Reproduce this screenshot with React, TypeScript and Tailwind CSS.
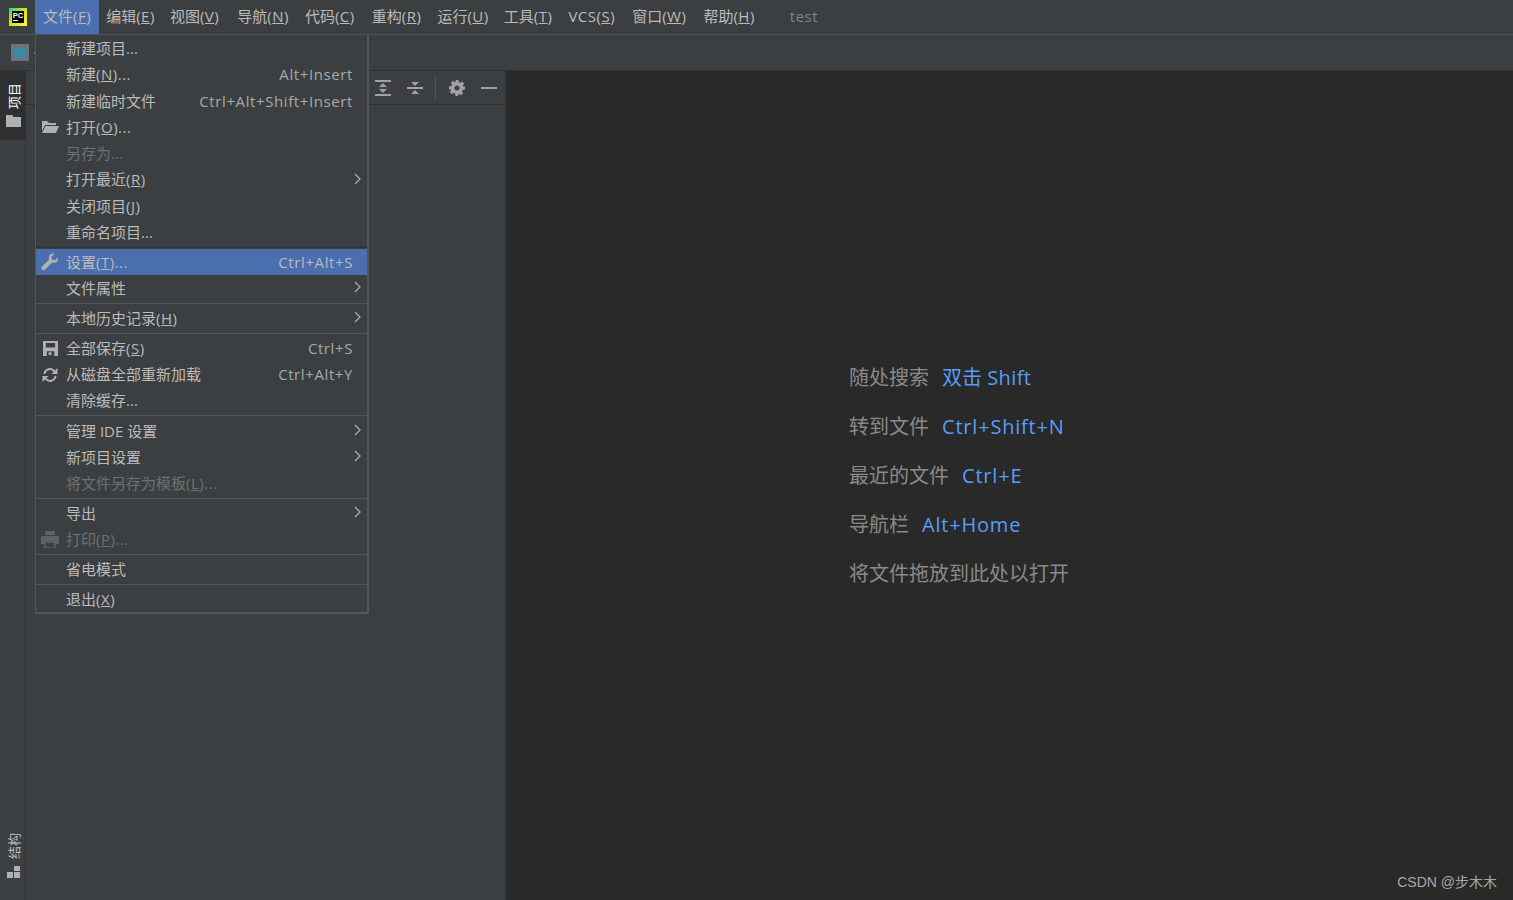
import React from 'react';

const menuBar = [
  { name: '编辑', key: 'E', cls: '-ml-px' },
  { name: '视图', key: 'V', cls: '-ml-px' },
  { name: '导航', key: 'N', cls: 'ml-[2px]' },
  { name: '代码', key: 'C', cls: '' },
  { name: '重构', key: 'R', cls: 'ml-px' },
  { name: '运行', key: 'U', cls: '' },
  { name: '工具', key: 'T', cls: '-ml-px' },
  { name: 'VCS', key: 'S', cls: '' },
  { name: '窗口', key: 'W', cls: 'ml-px' },
  { name: '帮助', key: 'H', cls: 'ml-px' },
];

const FONT = "font-['Open_Sans','Noto_Sans_CJK_SC',sans-serif]";

const FolderOpenIcon = () => (
  <svg width="18" height="14" viewBox="0 0 18 14"><path d="M1 1h5l2 2h7v2H4L1 11z" fill="#afb1b3" /><path d="M4.500 6H18l-3 7H1z" fill="#afb1b3" /></svg>
);
const WrenchIcon = () => (
  <svg width="18" height="18" viewBox="0 0 18 18"><path d="M17 4.200l-3.200 3-2.700-.6-.7-2.700L13.500.8C11 0 8.300 1.200 7.800 3.800c-.2 1 0 1.900.3 2.700L1 13.500c-.9 1-.8 2.300 0 3.100.9.900 2.300.9 3.100 0l7-7c2.500.8 5.100-.2 5.800-2.700.2-.9.200-1.800.1-2.700z" fill="#afb1b3" /></svg>
);
const SaveIcon = () => (
  <svg width="15" height="15" viewBox="0 0 16 16"><path fillRule="evenodd" d="M0 0h16v16H0zM3 2v5h10V2zM4 11v5h8v-5z" fill="#afb1b3" /><rect x="6" y="12" width="3" height="3" fill="#afb1b3" /></svg>
);
const ReloadIcon = () => (
  <svg width="16" height="16" viewBox="0 0 16 16" fill="none"><path d="M2.500 7A5.500 5.500 0 0 1 12.500 4.500" stroke="#afb1b3" strokeWidth="2" /><path d="M15.500 1v6h-6z" fill="#afb1b3" /><path d="M13.500 9A5.500 5.500 0 0 1 3.500 11.500" stroke="#afb1b3" strokeWidth="2" /><path d="M.5 15V9h6z" fill="#afb1b3" /></svg>
);
const PrintIcon = () => (
  <svg width="18" height="17" viewBox="0 0 18 17"><path d="M4 0h10v4H4zM1 5h16a1 1 0 0 1 1 1v7h-4v-3H4v3H0V6a1 1 0 0 1 1-1z" fill="#5f6264" /><rect x="4" y="11" width="10" height="6" fill="none" stroke="#5f6264" strokeWidth="1.500" /></svg>
);

const Chevron = () => (
  <svg width="8" height="12" viewBox="0 0 8 12" fill="none" className="absolute right-[5px] top-[6px]"><path d="M1 1l5 5-5 5" stroke="#a9abad" strokeWidth="1.300" /></svg>
);

interface Row {
  label: string;
  key?: string;
  tail?: string;
  accel?: string;
  icon?: React.ReactNode;
  sub?: boolean;
  off?: boolean;
  active?: boolean;
}

const groups: { cls: string; rows: Row[] }[] = [
  {
    cls: 'pt-[0.3px] pb-[0.5px]',
    rows: [
      { label: '新建项目...' },
      { label: '新建', key: 'N', tail: '...', accel: 'Alt+Insert' },
      { label: '新建临时文件', accel: 'Ctrl+Alt+Shift+Insert' },
      { label: '打开', key: 'O', tail: '...', icon: <FolderOpenIcon /> },
      { label: '另存为...', off: true },
      { label: '打开最近', key: 'R', sub: true },
      { label: '关闭项目', key: 'J' },
      { label: '重命名项目...' },
    ],
  },
  {
    cls: 'border-t-2 border-[#323537] pt-px',
    rows: [
      { label: '设置', key: 'T', tail: '...', accel: 'Ctrl+Alt+S', icon: <WrenchIcon />, active: true },
      { label: '文件属性', sub: true },
    ],
  },
  { cls: 'border-t border-[#515658] mt-[1.5px] py-px', rows: [{ label: '本地历史记录', key: 'H', sub: true }] },
  {
    cls: 'border-t border-[#515658] pt-[1.7px] pb-px',
    rows: [
      { label: '全部保存', key: 'S', accel: 'Ctrl+S', icon: <SaveIcon /> },
      { label: '从磁盘全部重新加载', accel: 'Ctrl+Alt+Y', icon: <ReloadIcon /> },
      { label: '清除缓存...' },
    ],
  },
  {
    cls: 'border-t border-[#515658] pt-[1.8px] pb-[0.8px]',
    rows: [
      { label: '管理 IDE 设置', sub: true },
      { label: '新项目设置', sub: true },
      { label: '将文件另存为模板', key: 'L', tail: '...', off: true },
    ],
  },
  {
    cls: 'border-t border-[#515658] pt-[1.6px] pb-px',
    rows: [
      { label: '导出', sub: true },
      { label: '打印', key: 'P', tail: '...', off: true, icon: <PrintIcon /> },
    ],
  },
  { cls: 'border-t border-[#515658] pt-[1.8px] pb-px', rows: [{ label: '省电模式' }] },
  { cls: 'border-t border-[#515658] pt-[1.7px] -mb-px', rows: [{ label: '退出', key: 'X' }] },
];

const MenuRow = ({ row }: { row: Row }) => (
  <div className={`relative flex h-[26.3px] items-center justify-between pl-[30px] pr-[14px] ${row.active ? 'bg-[#4b6eaf]' : ''} ${row.off ? 'text-[#6d7072]' : 'text-[#bbbbbb]'}`}>
    {row.icon && <span className="absolute left-[5px] top-0 flex h-full w-[18px] items-center justify-center">{row.icon}</span>}
    <span>
      {row.label}
      {row.key && <span className="tracking-[0.5px]">(<u>{row.key}</u>){row.tail}</span>}
    </span>
    {row.accel && <span className={`tracking-[0.6px] ${row.active ? 'text-[#bbbbbb]' : 'text-[#a6a9ab]'}`}>{row.accel}</span>}
    {row.sub && <Chevron />}
  </div>
);

const hints: [string, string, string][] = [
  ['随处搜索', '双击 ', 'Shift'],
  ['转到文件', '', 'Ctrl+Shift+N'],
  ['最近的文件', '', 'Ctrl+E'],
  ['导航栏', '', 'Alt+Home'],
  ['将文件拖放到此处以打开', '', ''],
];

export default function App() {
  return (
    <div className={`relative flex h-[900px] w-[1513px] flex-col overflow-hidden bg-[#3c3f41] text-[15px] leading-none text-[#bbbbbb] ${FONT}`}>
      {/* 顶部菜单 */}
      <div className="flex h-[35px] shrink-0 items-center border-b border-[#505356]">
        <div className="flex w-[35px] justify-center">
          <svg width="18" height="18" viewBox="0 0 18 18">
            <defs>
              <linearGradient id="pc" x1="0" y1="0" x2="1" y2="1">
                <stop offset="0" stopColor="#21d789" />
                <stop offset="0.500" stopColor="#d4e616" />
                <stop offset="1" stopColor="#fcf84a" />
              </linearGradient>
            </defs>
            <rect width="18" height="18" fill="url(#pc)" />
            <rect x="3" y="3" width="12" height="12" fill="#000" />
            <text x="3.700" y="9.500" fontSize="7.500" fontWeight="700" fill="#fff" fontFamily="Liberation Sans">PC</text>
            <rect x="4" y="12" width="5" height="1" fill="#fff" />
          </svg>
        </div>
        <div className="flex h-[34px] items-center bg-[#4b6eaf] px-2 pb-[2px]">
          文件<span className="tracking-[0.5px]">(<u>F</u>)</span>
        </div>
        {menuBar.map(({ name, key, cls }) => (
          <div key={key} className={`px-2 pb-[2px] ${cls}`}>
            <span className={name === 'VCS' ? 'tracking-[0.5px]' : ''}>{name}</span>
            <span className="tracking-[0.5px]">(<u>{key}</u>)</span>
          </div>
        ))}
        <div className="ml-[27px] pb-[2px] tracking-[0.5px] text-[#808487]">test</div>
      </div>

      {/* 导航栏 */}
      <div className="flex h-[36px] shrink-0 items-center border-b border-[#323232]">
        <div className="mb-px ml-[11px] h-[17px] w-[18px] bg-[#6e7376] px-[3px] pb-[3px] pt-[4px]">
          <div className="h-full w-full bg-[#3d88a5]" />
        </div>
        <div className="ml-[5px] h-[2px] w-px bg-[#3d88a5]" />
      </div>

      <div className="flex min-h-0 flex-1">
        {/* 左侧工具条 */}
        <div className="flex w-[26px] shrink-0 flex-col justify-between border-r border-[#323232]">
          <div className="flex h-[69px] flex-col items-center bg-[#2d2f30] pl-[3px] pt-[12px]">
            <span className="rotate-180 text-[13px] text-white [text-orientation:sideways] [writing-mode:vertical-rl]">项目</span>
            <svg width="15" height="12" viewBox="0 0 15 12" className="mr-px mt-[6px]"><path d="M0 0h6l2 2h7v10H0z" fill="#afb1b3" /></svg>
          </div>
          <div className="flex flex-col items-center pb-[22px] pl-[3px]">
            <span className="rotate-180 text-[13px] text-[#bbbbbb] [text-orientation:sideways] [writing-mode:vertical-rl]">结构</span>
            <svg width="13" height="12" viewBox="0 0 13 12" className="mr-px mt-[7px]"><path d="M7 0h6v5H7zM0 6h6v6H0zM7 6h6v6H7z" fill="#afb1b3" /></svg>
          </div>
        </div>

        {/* 项目面板 */}
        <div className="w-[480px] shrink-0 border-r border-[#323232]">
          <div className="relative flex h-[34px] items-center border-b border-[#323232]">
            <div className="absolute left-[349px] top-[5px] flex items-center">
              <svg width="16" height="18" viewBox="0 0 16 18"><path d="M0 1h16v2H0zM0 15h16v2H0z" fill="#9fa1a3" /><path d="M8 4l4 4H4zM8 14l-4-4h8z" fill="#9fa1a3" /></svg>
              <svg width="16" height="18" viewBox="0 0 16 18" className="ml-[16px]"><path d="M0 8h16v2H0z" fill="#9fa1a3" /><path d="M8 7L4 3h8zM8 11l4 4H4z" fill="#9fa1a3" /></svg>
              <div className="ml-[12px] h-[24px] w-px bg-[#515658]" />
              <svg width="16" height="16" viewBox="0 0 16 16" className="ml-[13px]"><path fillRule="evenodd" d="M6.500 0h3l.4 2.200 1.300.6L13.100 1.500l2.100 2.100-1.300 1.900.6 1.300L16 6.500v3l-2.500.4-.6 1.300 1.300 1.900-2.100 2.100-1.900-1.300-1.300.6L9.500 16h-3l-.4-2.500-1.300-.6-1.900 1.300-2.100-2.100 1.300-1.900-.6-1.300L0 9.500v-3l2.500-.4.6-1.300-1.300-1.900 2.100-2.100 1.900 1.300 1.300-.6zM8 5.500a2.500 2.500 0 1 0 0 5 2.500 2.500 0 0 0 0-5z" fill="#9fa1a3" /></svg>
              <div className="ml-[16px] h-[2px] w-[16px] bg-[#9fa1a3]" />
            </div>
          </div>
        </div>

        {/* 编辑器 */}
        <div className="relative flex-1 bg-[#292929]">
          <div className="ml-[343px] mt-[295px] flex flex-col gap-[24.500px] text-[20px] leading-[24.500px] text-[#8a8a8a]">
            {hints.map(([label, cjk, value]) => (
              <div key={label} className="flex gap-[13px]">
                <span>{label}</span>
                {value && (
                  <span className="text-[#589df6]">
                    {cjk}
                    <span className={cjk ? 'tracking-[0.4px]' : 'tracking-[0.8px]'}>{value}</span>
                  </span>
                )}
              </div>
            ))}
          </div>
          <div className="absolute bottom-[11px] right-[16px] font-['Liberation_Sans','Noto_Sans_CJK_SC',sans-serif] text-[14px] text-[#a8a8a8]">CSDN @步木木</div>
        </div>
      </div>

      {/* 文件菜单 */}
      <div className="absolute left-[35px] top-[35px] w-[334px] border-b-2 border-l border-r-2 border-[#515658] bg-[#3c3f41]">
        {groups.map((g, i) => (
          <div key={i} className={g.cls}>
            {g.rows.map((r) => (
              <MenuRow key={r.label} row={r} />
            ))}
          </div>
        ))}
      </div>
    </div>
  );
}
